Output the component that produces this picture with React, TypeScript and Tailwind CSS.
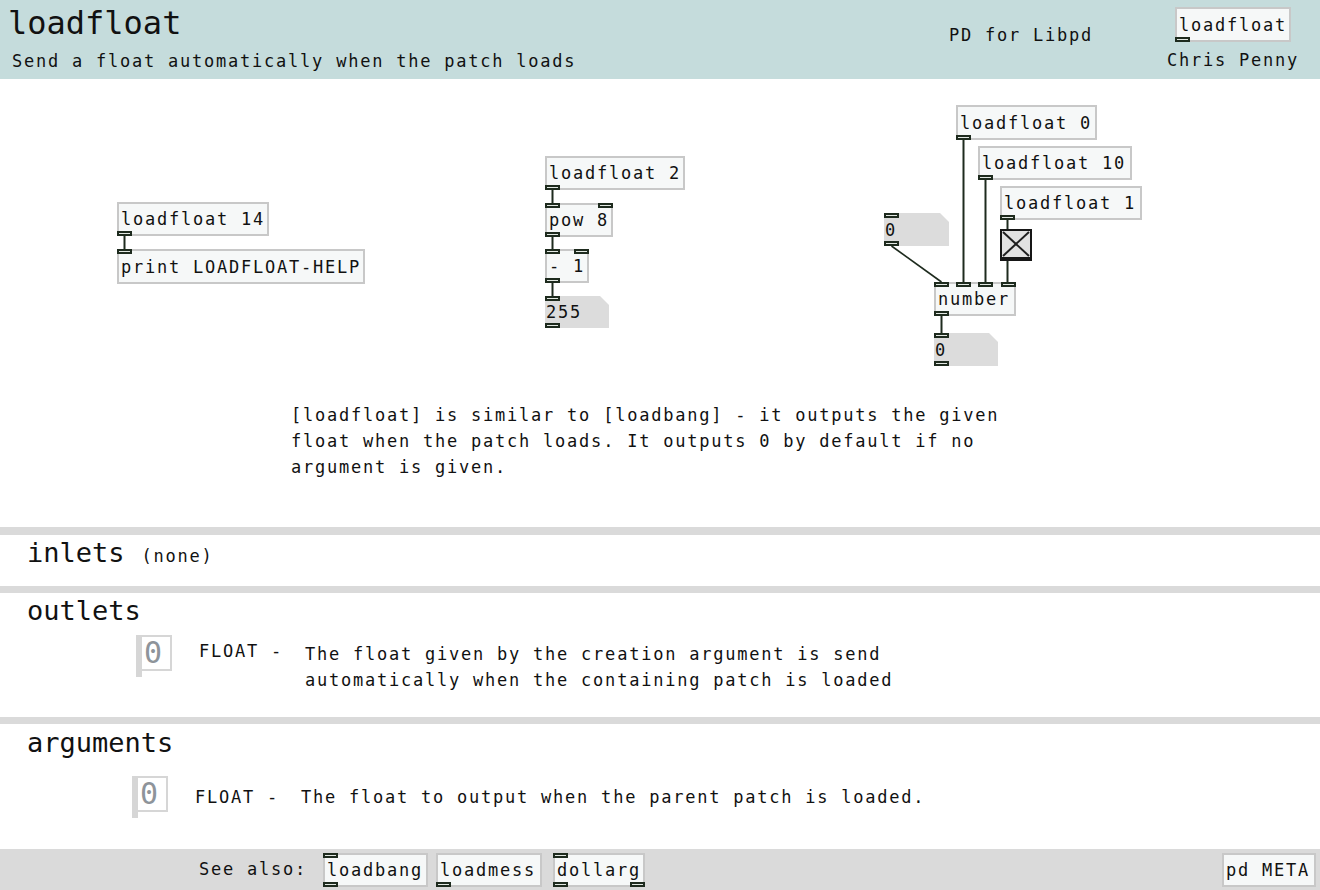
import React from "react";

function Port({ cls }: { cls: string }) {
  return <span className={`absolute w-[15px] h-[5px] border-2 border-[#1e2b1e] bg-[#e3e9e3] ${cls}`} />;
}

function Obj({ cls, children, ports }: { cls: string; children: React.ReactNode; ports?: string[] }) {
  return (
    <div
      className={`flex items-center border-2 border-[#c8c8c8] bg-[#f6f8f8] pl-[2px] pt-[2px] whitespace-nowrap text-[17px] tracking-[1.77px] text-[#111] ${cls}`}
    >
      {children}
      {ports?.map((p, i) => (
        <Port key={i} cls={p} />
      ))}
    </div>
  );
}

function Atom({ cls, children }: { cls: string; children: React.ReactNode }) {
  return (
    <div
      className={`absolute flex items-center bg-[#dcdcdc] pl-[1px] pt-[2px] text-[17px] tracking-[1.77px] text-[#111] [clip-path:polygon(0_0,calc(100%_-_9px)_0,100%_9px,100%_100%,0_100%)] ${cls}`}
    >
      {children}
      <Port cls="left-0 top-0" />
      <Port cls="left-0 bottom-0" />
    </div>
  );
}

function ZeroIcon() {
  return (
    <div className="relative w-[36px] h-[42px] shrink-0">
      <div className="absolute left-0 top-0 w-[36px] h-[36px] border-2 border-l-[6px] border-[#d6d6d6] bg-white flex items-center pl-[2px] text-[30px] leading-none text-[#8e949a]">
        0
      </div>
      <div className="absolute left-0 top-[36px] w-[6px] h-[6px] bg-[#d6d6d6]" />
    </div>
  );
}

const lines: [number, number, number, number, number][] = [
  [124.5, 157, 124.5, 170, 2],
  [552.5, 111, 552.5, 124, 2],
  [552.5, 158, 552.5, 170, 2],
  [552.5, 204, 552.5, 217, 2],
  [891.5, 167, 941.5, 203, 1.6],
  [963.5, 61, 963.5, 203, 2],
  [985.5, 101, 985.5, 203, 2],
  [1007.5, 141, 1007.5, 150, 2],
  [1007.5, 182, 1007.5, 203, 2],
  [941.5, 237, 941.5, 254, 2],
];

export default function App() {
  return (
    <div className="w-[1320px] h-[890px] overflow-hidden bg-white text-[#111] font-['DejaVu_Sans_Mono',monospace] flex flex-col">
      {/* Header */}
      <header className="flex h-[79px] shrink-0 bg-[#c5dcdc]">
        <div className="w-[949px] pl-[8px] pt-[5px] flex flex-col">
          <div className="text-[32px] leading-[37px]">loadfloat</div>
          <div className="ml-[4px] mt-[6px] text-[17px] leading-[26px] tracking-[1.77px]">
            Send a float automatically when the patch loads
          </div>
        </div>
        <div className="w-[218px] pt-[22px] text-[17px] leading-[26px] tracking-[1.77px]">PD for Libpd</div>
        <div className="flex flex-col pt-[7px]">
          <Obj cls="relative ml-[8px] w-[116px] h-[35px]" ports={["-left-[2px] -bottom-[2px]"]}>
            loadfloat
          </Obj>
          <div className="mt-[5px] text-[17px] leading-[26px] tracking-[1.77px]">Chris Penny</div>
        </div>
      </header>

      {/* Patch canvas */}
      <div className="relative h-[448px] shrink-0">
        <svg className="absolute inset-0" width="1320" height="448">
          {lines.map(([x1, y1, x2, y2, w], i) => (
            <line key={i} x1={x1} y1={y1} x2={x2} y2={y2} stroke="#1e2b1e" strokeWidth={w} />
          ))}
        </svg>

        <Obj cls="absolute left-[117px] top-[123px] w-[152px] h-[34px]" ports={["-left-[2px] -bottom-[2px]"]}>
          loadfloat 14
        </Obj>
        <Obj cls="absolute left-[117px] top-[170px] w-[248px] h-[35px]" ports={["-left-[2px] -top-[2px]"]}>
          print LOADFLOAT-HELP
        </Obj>

        <Obj cls="absolute left-[545px] top-[77px] w-[140px] h-[34px]" ports={["-left-[2px] -bottom-[2px]"]}>
          loadfloat 2
        </Obj>
        <Obj
          cls="absolute left-[545px] top-[124px] w-[68px] h-[34px]"
          ports={["-left-[2px] -top-[2px]", "-right-[2px] -top-[2px]", "-left-[2px] -bottom-[2px]"]}
        >
          pow 8
        </Obj>
        <Obj
          cls="absolute left-[545px] top-[170px] w-[44px] h-[34px]"
          ports={["-left-[2px] -top-[2px]", "-right-[2px] -top-[2px]", "-left-[2px] -bottom-[2px]"]}
        >
          - 1
        </Obj>
        <Atom cls="left-[545px] top-[217px] w-[64px] h-[32px]">255</Atom>

        <Obj cls="absolute left-[956px] top-[26px] w-[141px] h-[35px]" ports={["-left-[2px] -bottom-[2px]"]}>
          loadfloat 0
        </Obj>
        <Obj cls="absolute left-[978px] top-[67px] w-[154px] h-[34px]" ports={["-left-[2px] -bottom-[2px]"]}>
          loadfloat 10
        </Obj>
        <Obj cls="absolute left-[1000px] top-[107px] w-[142px] h-[34px]" ports={["-left-[2px] -bottom-[2px]"]}>
          loadfloat 1
        </Obj>

        <svg className="absolute left-[1000px] top-[150px]" width="32" height="32" viewBox="0 0 32 32">
          <rect x="0" y="0" width="32" height="32" fill="#161616" />
          <rect x="2" y="2" width="28" height="26" fill="#e2e2e2" />
          <line x1="3" y1="3" x2="29" y2="27" stroke="#1e1e1e" strokeWidth="2" />
          <line x1="29" y1="3" x2="3" y2="27" stroke="#1e1e1e" strokeWidth="2" />
        </svg>

        <Atom cls="left-[884px] top-[134px] w-[65px] h-[33px]">0</Atom>

        <Obj
          cls="absolute left-[934px] top-[203px] w-[82px] h-[34px]"
          ports={["-left-[2px] -top-[2px]", "left-[20px] -top-[2px]", "left-[42px] -top-[2px]", "left-[65px] -top-[2px]", "-left-[2px] -bottom-[2px]"]}
        >
          number
        </Obj>

        <Atom cls="left-[934px] top-[254px] w-[64px] h-[33px]">0</Atom>

        <div className="absolute left-[291px] top-[323px] text-[17px] leading-[26px] tracking-[1.77px] whitespace-pre">
          {"[loadfloat] is similar to [loadbang] - it outputs the given\nfloat when the patch loads. It outputs 0 by default if no\nargument is given."}
        </div>
      </div>

      <div className="h-[8px] shrink-0 bg-[#dadada]" />

      {/* inlets */}
      <section className="h-[51px] shrink-0 pt-[2px] pl-[27px] flex items-baseline">
        <div className="text-[27px] leading-[32px]">inlets</div>
        <div className="ml-[17px] text-[17px] leading-[26px] tracking-[1.77px]">(none)</div>
      </section>

      <div className="h-[7px] shrink-0 bg-[#dadada]" />

      {/* outlets */}
      <section className="h-[124px] shrink-0 pt-[2px] pl-[27px] flex flex-col">
        <div className="text-[27px] leading-[32px]">outlets</div>
        <div className="flex items-start mt-[8px] ml-[109px] text-[17px] leading-[26px] tracking-[1.77px]">
          <ZeroIcon />
          <div className="ml-[27px] mt-[3px] w-[106px]">FLOAT -</div>
          <div className="mt-[6px]">
            <div>The float given by the creation argument is send</div>
            <div>automatically when the containing patch is loaded</div>
          </div>
        </div>
      </section>

      <div className="h-[7px] shrink-0 bg-[#dadada]" />

      {/* arguments */}
      <section className="h-[125px] shrink-0 pt-[3px] pl-[27px] flex flex-col">
        <div className="text-[27px] leading-[32px]">arguments</div>
        <div className="flex items-start mt-[17px] ml-[105px] text-[17px] leading-[26px] tracking-[1.77px]">
          <ZeroIcon />
          <div className="ml-[27px] mt-[8px] w-[106px]">FLOAT -</div>
          <div className="mt-[8px]">The float to output when the parent patch is loaded.</div>
        </div>
      </section>

      {/* footer */}
      <footer className="h-[41px] shrink-0 bg-[#dadada] flex items-start pt-[4px]">
        <div className="ml-[199px] mt-[3px] w-[124px] text-[17px] leading-[26px] tracking-[1.77px]">See also:</div>
        <Obj cls="relative w-[105px] h-[34px]" ports={["-left-[2px] -top-[2px]", "-left-[2px] -bottom-[2px]"]}>
          loadbang
        </Obj>
        <Obj cls="relative ml-[8px] w-[106px] h-[34px]" ports={["-left-[2px] -bottom-[2px]"]}>
          loadmess
        </Obj>
        <Obj
          cls="relative ml-[11px] w-[92px] h-[34px]"
          ports={["-left-[2px] -top-[2px]", "-left-[2px] -bottom-[2px]", "-right-[2px] -bottom-[2px]"]}
        >
          dollarg
        </Obj>
        <Obj cls="relative ml-auto mr-[4px] w-[94px] h-[34px]">pd META</Obj>
      </footer>
    </div>
  );
}
